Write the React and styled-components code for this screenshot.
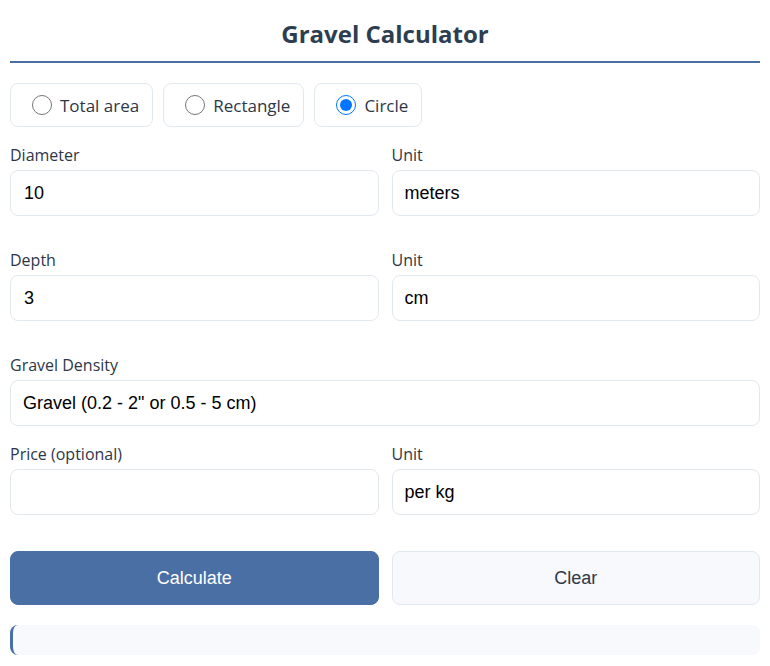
import React, { useState } from "react";
import styled, { createGlobalStyle } from "styled-components";

const Global = createGlobalStyle`
  body {
    margin: 0;
    background: #fff;
    font-family: "Open Sans", "Noto Sans", sans-serif;
  }
`;

const S = {
  Wrap: styled.div`
    padding: 0 10px;
  `,
  Title: styled.h1`
    margin: 0;
    padding: 17px 0 10px;
    text-align: center;
    font-size: 24px;
    line-height: 34px;
    font-weight: 700;
    color: #2c3e50;
    border-bottom: 2px solid #4a6fa5;
  `,
  Shapes: styled.div`
    display: flex;
    gap: 10px;
    margin-top: 20px;
  `,
  Shape: styled.label`
    display: flex;
    align-items: center;
    height: 44px;
    box-sizing: border-box;
    padding: 0 13px 0 16px;
    border: 1px solid #e2e8f0;
    border-radius: 8px;
    font-size: 17px;
    color: #2d3748;
    cursor: pointer;
    input {
      width: 20px;
      height: 20px;
      margin: 0 8px 0 5px;
    }
  `,
  Row: styled.div`
    display: grid;
    grid-template-columns: ${(p) => (p.$single ? "1fr" : "1fr 1fr")};
    gap: 13px;
    margin-top: ${(p) => p.$top}px;
  `,
  Field: styled.div`
    display: flex;
    flex-direction: column;
  `,
  Label: styled.label`
    font-size: 16px;
    line-height: 22px;
    color: #2d3748;
    margin-bottom: 4px;
  `,
  Input: styled.input`
    height: 46px;
    box-sizing: border-box;
    padding: 0 13px;
    border: 1px solid #e2e8f0;
    border-radius: 8px;
    font-family: "Liberation Sans", Arial, sans-serif;
    font-size: 18px;
    color: #000;
    outline: none;
  `,
  Select: styled.select`
    height: 46px;
    box-sizing: border-box;
    padding: 0 12px;
    border: 1px solid #e2e8f0;
    border-radius: 8px;
    background: #fff;
    appearance: none;
    font-family: "Liberation Sans", Arial, sans-serif;
    font-size: 18px;
    color: #000;
    outline: none;
  `,
  Buttons: styled.div`
    display: grid;
    grid-template-columns: 1fr 1fr;
    gap: 13px;
    margin-top: 36px;
  `,
  Button: styled.button`
    height: 54px;
    border-radius: 8px;
    border: 1px solid ${(p) => (p.$primary ? "#4a6fa5" : "#e2e8f0")};
    background: ${(p) => (p.$primary ? "#4a6fa5" : "#f7f9fc")};
    color: ${(p) => (p.$primary ? "#fff" : "#2d3748")};
    font-family: "Liberation Sans", Arial, sans-serif;
    font-size: 18px;
    cursor: pointer;
  `,
  Result: styled.div`
    margin: 20px 0 10px;
    height: 30px;
    background: #f7f9fc;
    border-left: 3px solid #4a6fa5;
    border-radius: 8px;
  `
};

export default function App() {
  const [shape, setShape] = useState("circle");
  const shapes = [
    ["area", "Total area"],
    ["rect", "Rectangle"],
    ["circle", "Circle"]
  ];

  return (
    <S.Wrap>
      <Global />
      <S.Title>Gravel Calculator</S.Title>
      <S.Shapes>
        {shapes.map(([id, text]) => (
          <S.Shape key={id}>
            <input
              type="radio"
              name="shape"
              checked={shape === id}
              onChange={() => setShape(id)}
            />
            {text}
          </S.Shape>
        ))}
      </S.Shapes>

      <S.Row $top={17}>
        <S.Field>
          <S.Label>Diameter</S.Label>
          <S.Input defaultValue="10" />
        </S.Field>
        <S.Field>
          <S.Label>Unit</S.Label>
          <S.Select defaultValue="meters">
            <option>meters</option>
            <option>feet</option>
          </S.Select>
        </S.Field>
      </S.Row>

      <S.Row $top={33}>
        <S.Field>
          <S.Label>Depth</S.Label>
          <S.Input defaultValue="3" />
        </S.Field>
        <S.Field>
          <S.Label>Unit</S.Label>
          <S.Select defaultValue="cm">
            <option>cm</option>
            <option>inches</option>
          </S.Select>
        </S.Field>
      </S.Row>

      <S.Row $top={33} $single>
        <S.Field>
          <S.Label>Gravel Density</S.Label>
          <S.Select defaultValue="g">
            <option value="g">Gravel (0.2 - 2" or 0.5 - 5 cm)</option>
          </S.Select>
        </S.Field>
      </S.Row>

      <S.Row $top={17}>
        <S.Field>
          <S.Label>Price (optional)</S.Label>
          <S.Input />
        </S.Field>
        <S.Field>
          <S.Label>Unit</S.Label>
          <S.Select defaultValue="kg">
            <option value="kg">per kg</option>
            <option value="t">per tonne</option>
          </S.Select>
        </S.Field>
      </S.Row>

      <S.Buttons>
        <S.Button $primary>Calculate</S.Button>
        <S.Button>Clear</S.Button>
      </S.Buttons>

      <S.Result />
    </S.Wrap>
  );
}
